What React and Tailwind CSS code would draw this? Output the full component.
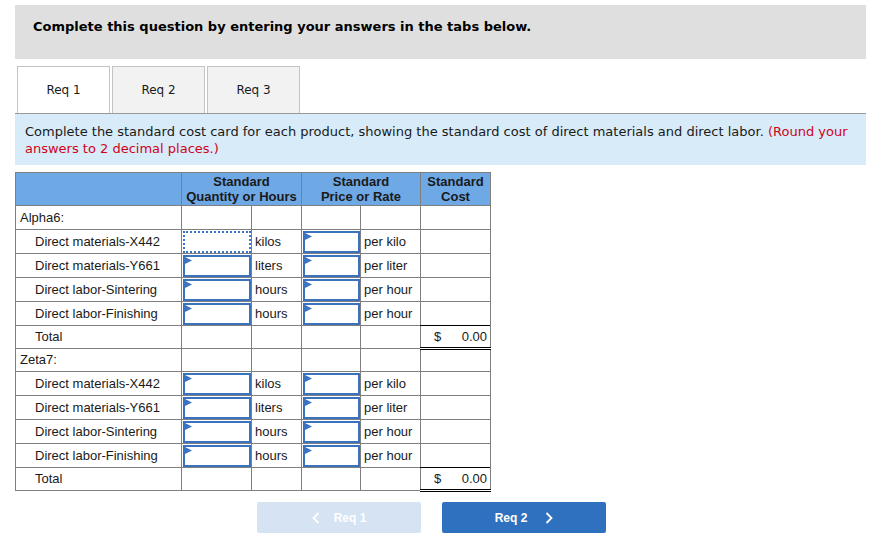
import React from 'react';

const verdana = { fontFamily: '"DejaVu Sans", Verdana, sans-serif' };
const arial = { fontFamily: '"Liberation Sans", Arial, sans-serif' };

const products = [
  {
    name: 'Alpha6:',
    focusFirst: true,
    items: [
      { label: 'Direct materials-X442', unit: 'kilos', per: 'per kilo' },
      { label: 'Direct materials-Y661', unit: 'liters', per: 'per liter' },
      { label: 'Direct labor-Sintering', unit: 'hours', per: 'per hour' },
      { label: 'Direct labor-Finishing', unit: 'hours', per: 'per hour' },
    ],
  },
  {
    name: 'Zeta7:',
    focusFirst: false,
    items: [
      { label: 'Direct materials-X442', unit: 'kilos', per: 'per kilo' },
      { label: 'Direct materials-Y661', unit: 'liters', per: 'per liter' },
      { label: 'Direct labor-Sintering', unit: 'hours', per: 'per hour' },
      { label: 'Direct labor-Finishing', unit: 'hours', per: 'per hour' },
    ],
  },
];

const cell = 'border border-[#7f7f7f] h-[24px] p-0';
const cellShort = 'border border-[#7f7f7f] h-[23px] p-0';

const InputBox = ({ focused }) => (
  <div
    className={
      focused
        ? 'relative h-[22px] border-2 border-dotted border-[#3a74c4]'
        : 'relative h-[22px] border-2 border-[#3a72bd]'
    }
  >
    {!focused && (
      <svg className="absolute left-0 top-0" width="7" height="7" viewBox="0 0 7 7">
        <polygon points="0,0 7,3.5 0,7" fill="#3a74c4" />
      </svg>
    )}
  </div>
);

const TotalRow = () => (
  <tr>
    <td className={`${cellShort} pl-[19px]`}>Total</td>
    <td className={cellShort}></td>
    <td className={cellShort}></td>
    <td className={cellShort}></td>
    <td className={cellShort}></td>
    <td className="border border-[#7f7f7f] border-t-black border-b-[3px] border-b-black border-double h-[23px] p-0">
      <div className="flex justify-between pl-[13px] pr-[3px]">
        <span>$</span>
        <span>0.00</span>
      </div>
    </td>
  </tr>
);

export default function App() {
  return (
    <div className="w-[891px] h-[553px] bg-white text-[#1a1a1a] overflow-hidden">
      <div className="ml-[15px] mt-[5px] w-[851px] h-[54px] bg-[#dfdfdf] pl-[18px] pt-[12px]">
        <div className="text-[13px] font-bold leading-[20px] text-black" style={verdana}>
          Complete this question by entering your answers in the tabs below.
        </div>
      </div>

      <div className="ml-[15px] w-[851px] mt-[7px] flex gap-[2px] pl-[2px] border-b border-[#999999]" style={verdana}>
        <div className="w-[93px] h-[47px] border border-b-0 border-[#c4c4c4] bg-white flex items-center justify-center text-[12px]">
          Req 1
        </div>
        <div className="w-[93px] h-[47px] border border-b-0 border-[#c4c4c4] bg-[#f2f2f2] flex items-center justify-center text-[12px]">
          Req 2
        </div>
        <div className="w-[93px] h-[47px] border border-b-0 border-[#c4c4c4] bg-[#f2f2f2] flex items-center justify-center text-[12px]">
          Req 3
        </div>
      </div>

      <div className="ml-[15px] w-[851px] h-[51px] bg-[#d7ebf8] pl-[10px] pt-[9px] text-[13px] leading-[17px]" style={verdana}>
        Complete the standard cost card for each product, showing the standard cost of direct materials and direct labor.{' '}
        <span className="text-[#d0021b]">(Round your answers to 2 decimal places.)</span>
      </div>

      <table className="ml-[15px] mt-[7px] border-collapse text-[13px] leading-[16px]" style={arial}>
        <colgroup>
          <col className="w-[166px]" />
          <col className="w-[70px]" />
          <col className="w-[50px]" />
          <col className="w-[59px]" />
          <col className="w-[60px]" />
          <col className="w-[70px]" />
        </colgroup>
        <thead>
          <tr className="bg-[#6ea8e5] font-bold text-[13px] leading-[15px] text-[#1a1a1a]">
            <th className="border border-[#7f7f7f] h-[33px]"></th>
            <th colSpan={2} className="border border-[#7f7f7f] text-center font-bold">
              Standard<br />Quantity or Hours
            </th>
            <th colSpan={2} className="border border-[#7f7f7f] text-center font-bold">
              Standard<br />Price or Rate
            </th>
            <th className="border border-[#7f7f7f] text-center font-bold">
              Standard<br />Cost
            </th>
          </tr>
        </thead>
        <tbody>
          {products.map((p, pi) => {
            const nameCell = pi === 0 ? cell : cellShort;
            return (
              <React.Fragment key={p.name}>
                <tr>
                  <td className={`${nameCell} pl-[4px]`}>{p.name}</td>
                  <td className={nameCell}></td>
                  <td className={nameCell}></td>
                  <td className={nameCell}></td>
                  <td className={nameCell}></td>
                  <td className={nameCell}></td>
                </tr>
                {p.items.map((it, i) => (
                  <tr key={it.label}>
                    <td className={`${cell} pl-[19px]`}>{it.label}</td>
                    <td className={`${cell} pl-[1px]`}>
                      <InputBox focused={p.focusFirst && i === 0} />
                    </td>
                    <td className={`${cell} pl-[3px]`}>{it.unit}</td>
                    <td className={`${cell} pl-[1px]`}>
                      <InputBox />
                    </td>
                    <td className={`${cell} pl-[3px]`}>{it.per}</td>
                    <td className={cell}></td>
                  </tr>
                ))}
                <TotalRow />
              </React.Fragment>
            );
          })}
        </tbody>
      </table>

      <div className="ml-[257px] mt-[10px] flex gap-[21px]" style={arial}>
        <div className="w-[164px] h-[31px] rounded-[2px] bg-[#d5e3f3] flex items-center justify-center gap-[14px] text-white text-[12px] font-bold">
          <svg width="8" height="12" viewBox="0 0 8 12">
            <polyline points="6.5,1 1.5,6 6.5,11" fill="none" stroke="white" strokeWidth="1.8" />
          </svg>
          <span>Req 1</span>
        </div>
        <div className="w-[164px] h-[31px] rounded-[2px] bg-[#2f71bf] flex items-center justify-center gap-[18px] text-white text-[12px] font-bold">
          <span>Req 2</span>
          <svg width="8" height="12" viewBox="0 0 8 12">
            <polyline points="1.5,1 6.5,6 1.5,11" fill="none" stroke="white" strokeWidth="1.8" />
          </svg>
        </div>
      </div>
    </div>
  );
}
